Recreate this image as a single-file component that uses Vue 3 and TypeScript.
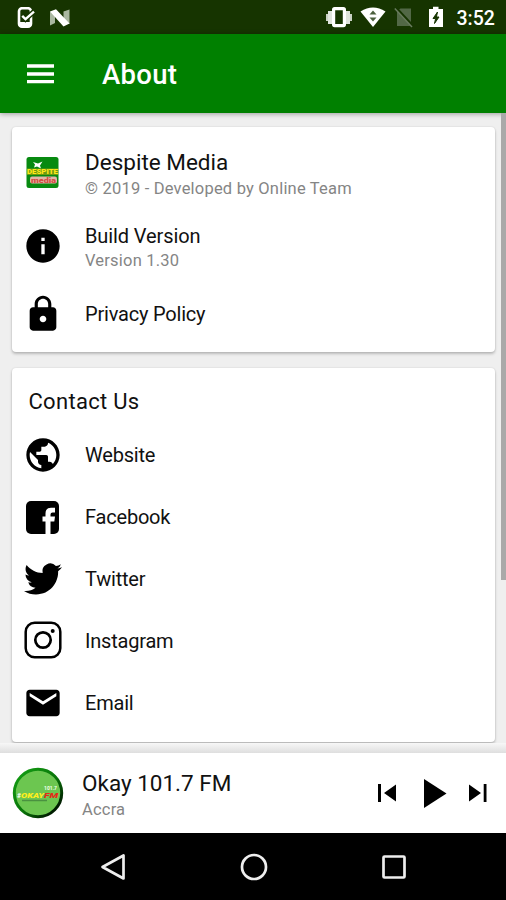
<script setup lang="ts">
interface Contact {
  id: string
  label: string
}

const contacts: Contact[] = [
  { id: 'website', label: 'Website' },
  { id: 'facebook', label: 'Facebook' },
  { id: 'twitter', label: 'Twitter' },
  { id: 'instagram', label: 'Instagram' },
  { id: 'email', label: 'Email' },
]
</script>

<template>
  <div class="screen">
    <div class="status">
      <div class="status-left">
        <svg class="device" width="18" height="22" viewBox="0 0 18 22">
          <rect x="2" y="1.2" width="12" height="18.5" rx="3" fill="none" stroke="#fff" stroke-width="2.6" />
          <path d="M2 15h12v4H2z" fill="#fff" />
          <path d="M5.2 9l3.3 3.3L17 4.4" fill="none" stroke="#163400" stroke-width="5" />
          <path d="M5.2 8.8l3.3 3.3L17 4.6" fill="none" stroke="#fff" stroke-width="2.4" />
        </svg>
        <svg class="nougat" width="22" height="18" viewBox="0 0 22 18">
          <path d="M1 2.500L6 5v9l-5 2.500zM14.500 2.500L20.500.5V15l-6-2z" fill="#a9b7a0" />
          <path d="M1 2.500L7 .3 20.500 14.500 14.500 17.500z" fill="#fff" />
        </svg>
      </div>
      <div class="status-right">
        <svg width="28" height="22" viewBox="0 0 28 22">
          <path d="M1 8h2v7H1zM25 8h2v7h-2z" fill="#c9d1c4" />
          <path d="M3 5h4v13H3zM21 5h4v13h-4z" fill="#dfe4dc" />
          <rect x="8.600" y="2.600" width="10.800" height="17" rx="1" fill="#163400" stroke="#fff" stroke-width="3.200" />
        </svg>
        <svg class="wifi" width="26" height="22" viewBox="0 0 26 22">
          <path d="M.5 5.500Q13-2.500 25.500 5.500L13 21z" fill="#fff" />
          <path d="M13 4.500l3.500 4h-7zM13 15.500l3.500-4h-7z" fill="#4b5f3d" />
        </svg>
        <svg class="sim" width="20" height="22" viewBox="0 0 20 22">
          <path d="M3 4.500L6.500 2.500H17V20H3z" fill="#526846" />
          <path d="M2 2L19 20.500" stroke="#163400" stroke-width="3" />
          <path d="M.8 2.500L18 21" stroke="#6a7c5f" stroke-width="1.500" />
        </svg>
        <svg class="battery" width="16" height="22" viewBox="0 0 16 22">
          <path d="M1 3h4V.8h5.500V3H15v18H1z" fill="#fff" />
          <path d="M9.500 6L5 12.500h2.600L6.500 17.500 11 11H8.400z" fill="#163400" stroke="#163400" />
        </svg>
        <span class="clock">3:52</span>
      </div>
    </div>

    <header class="appbar">
      <svg class="menu" width="27" height="20" viewBox="0 0 27 20">
        <path d="M0 2h27M0 10h27M0 17.700h27" stroke="#fff" stroke-width="3.300" />
      </svg>
      <h1>About</h1>
    </header>

    <main class="content">
      <section class="card info">
        <div class="row tall">
          <span class="icon">
            <svg width="33" height="33" viewBox="0 0 33 33">
              <rect x=".5" y="1" width="32" height="31" rx="2.500" fill="#078a10" />
              <path d="M7 6l5 1.500 4.500-2-2.500 4 1 3-4-2-3 1 1-3z" fill="#fff" />
              <rect x="1" y="12.500" width="31" height="6.500" fill="#6c9b10" />
              <rect x="4" y="20.500" width="27" height="7" rx="2" fill="#e0b8a6" />
              <text x="1" y="18" textLength="31" lengthAdjust="spacingAndGlyphs" class="logo-top">DESPITE</text>
              <text x="5" y="26.700" textLength="25" lengthAdjust="spacingAndGlyphs" class="logo-bottom">media</text>
            </svg>
          </span>
          <div class="texts lead">
            <div class="title big">Despite Media</div>
            <div class="sub">© 2019 - Developed by Online Team</div>
          </div>
        </div>
        <div class="row tall">
          <span class="icon">
            <svg width="40" height="40" viewBox="0 0 24 24">
              <path d="M12 2C6.480 2 2 6.480 2 12s4.480 10 10 10 10-4.480 10-10S17.520 2 12 2zm1 15h-2v-6h2v6zm0-8h-2V7h2v2z" />
            </svg>
          </span>
          <div class="texts build">
            <div class="title">Build Version</div>
            <div class="sub">Version 1.30</div>
          </div>
        </div>
        <div class="row">
          <span class="icon">
            <svg width="40" height="40" viewBox="0 0 24 24">
              <path d="M18 8h-1V6c0-2.760-2.240-5-5-5S7 3.240 7 6v2H6c-1.100 0-2 .9-2 2v10c0 1.100.9 2 2 2h12c1.100 0 2-.9 2-2V10c0-1.100-.9-2-2-2zm-6 9c-1.100 0-2-.9-2-2s.9-2 2-2 2 .9 2 2-.9 2-2 2zm3.100-9H8.900V6c0-1.710 1.390-3.100 3.100-3.100 1.710 0 3.100 1.390 3.100 3.100v2z" />
            </svg>
          </span>
          <div class="title contact">Privacy Policy</div>
        </div>
      </section>

      <section class="card">
        <h2>Contact Us</h2>
        <div v-for="c in contacts" :key="c.id" class="row">
          <span class="icon">
            <svg v-if="c.id === 'website'" width="40" height="40" viewBox="0 0 24 24">
              <path d="M12 2C6.480 2 2 6.480 2 12s4.480 10 10 10 10-4.480 10-10S17.520 2 12 2zm-1 17.930c-3.950-.49-7-3.850-7-7.930 0-.62.080-1.210.21-1.790L9 15v1c0 1.100.9 2 2 2v1.930zm6.900-2.540c-.26-.81-1-1.390-1.900-1.390h-1v-3c0-.55-.45-1-1-1H8v-2h2c.55 0 1-.45 1-1V7h2c1.100 0 2-.9 2-2v-.41c2.930 1.190 5 4.060 5 7.410 0 2.080-.8 3.970-2.100 5.390z" />
            </svg>
            <svg v-else-if="c.id === 'facebook'" width="33" height="33" viewBox="0 0 33 33">
              <rect width="33" height="33" rx="5" />
              <path d="M19.500 33V20.500H16.500V15.500H19.500V12.500Q19.500 6.700 25 6.700H29V11.500H26.500Q24.500 11.500 24.500 13.500V15.500H29L28.300 20.500H24.500V33z" fill="#fff" />
            </svg>
            <svg v-else-if="c.id === 'twitter'" width="38" height="38" viewBox="0 0 24 24">
              <path d="M23.953 4.570a10 10 0 01-2.825.775 4.958 4.958 0 002.163-2.723c-.951.555-2.005.959-3.127 1.184a4.920 4.920 0 00-8.384 4.482C7.690 8.095 4.067 6.130 1.640 3.162a4.822 4.822 0 00-.666 2.475c0 1.710.87 3.213 2.188 4.096a4.904 4.904 0 01-2.228-.616v.06a4.923 4.923 0 003.946 4.827 4.996 4.996 0 01-2.212.085 4.936 4.936 0 004.604 3.417 9.867 9.867 0 01-6.102 2.105c-.39 0-.779-.023-1.170-.067a13.995 13.995 0 007.557 2.209c9.053 0 13.998-7.496 13.998-13.985 0-.21 0-.42-.015-.63A9.935 9.935 0 0024 4.590z" />
            </svg>
            <svg v-else-if="c.id === 'instagram'" class="insta" width="38" height="38" viewBox="0 0 38 38" fill="none" stroke="#000">
              <rect x="1.700" y="1.700" width="34.600" height="34.600" rx="9" stroke-width="2.500" />
              <circle cx="19" cy="19" r="7.700" stroke-width="2.700" />
              <circle cx="28.700" cy="10" r="2" fill="#000" stroke="none" />
            </svg>
            <svg v-else width="40" height="40" viewBox="0 0 24 24">
              <path d="M20 4H4c-1.100 0-1.990.9-1.990 2L2 18c0 1.100.9 2 2 2h16c1.100 0 2-.9 2-2V6c0-1.100-.9-2-2-2zm0 4l-8 5-8-5V6l8 5 8-5v2z" />
            </svg>
          </span>
          <div class="title contact">{{ c.label }}</div>
        </div>
      </section>
      <div class="scrollbar"></div>
    </main>

    <div class="player-shadow"></div>
    <footer class="player">
      <svg class="cover" width="52" height="52" viewBox="0 0 52 52">
        <defs>
          <linearGradient id="ring" x1="0" y1="0" x2="1" y2="1">
            <stop offset="0" stop-color="#16a316" />
            <stop offset=".55" stop-color="#087208" />
            <stop offset=".85" stop-color="#001d00" />
          </linearGradient>
        </defs>
        <circle cx="26" cy="26" r="23.700" fill="#6cc650" stroke="url(#ring)" stroke-width="3" />
        <text x="32" y="22.500" textLength="13" lengthAdjust="spacingAndGlyphs" class="freq">101.7</text>
        <text x="5" y="31" textLength="4" lengthAdjust="spacingAndGlyphs" class="hash">#</text>
        <text x="9" y="31" textLength="23" lengthAdjust="spacingAndGlyphs" class="okay">OKAY</text>
        <text x="32" y="31" textLength="14" lengthAdjust="spacingAndGlyphs" class="fm">FM</text>
        <path d="M10 33.500h25" stroke="#4a9140" stroke-width="1.500" />
      </svg>
      <div class="texts">
        <div class="station">Okay 101.7 FM</div>
        <div class="sub">Accra</div>
      </div>
      <div class="controls">
        <svg width="18" height="18" viewBox="0 0 18 18"><path d="M0 0h3v18H0zM18 .5v17L6 9z" /></svg>
        <svg class="play" width="23" height="29" viewBox="0 0 23 29"><path d="M0 0l22.500 14.500L0 29z" /></svg>
        <svg width="18" height="18" viewBox="0 0 18 18"><path d="M14.700 0h2.800v18h-2.800zM0 .5v17L12 9z" /></svg>
      </div>
    </footer>

    <nav class="navbar">
      <svg width="28" height="28" viewBox="0 0 28 28"><path d="M24.500 2.500v23L3.500 14z" /></svg>
      <svg width="28" height="28" viewBox="0 0 28 28"><circle cx="14" cy="14" r="12" /></svg>
      <svg width="28" height="28" viewBox="0 0 28 28"><rect x="3.500" y="3.500" width="21" height="21" rx="1" /></svg>
    </nav>
  </div>
</template>

<style>
body {
  margin: 0;
  background: #000;
}
</style>

<style scoped>
.screen {
  width: 506px;
  height: 900px;
  display: flex;
  flex-direction: column;
  overflow: hidden;
  font-family: Roboto, "Liberation Sans", sans-serif;
  color: #111;
  background: #efefef;
}
svg {
  display: block;
  flex: none;
}
.status {
  height: 34px;
  flex: none;
  background: #163400;
  display: flex;
  justify-content: space-between;
  padding: 6px 9.500px 0 17px;
  box-sizing: border-box;
}
.status-left,
.status-right {
  display: flex;
}
.device {
  margin-top: 1px;
}
.nougat {
  margin: 3px 0 0 14px;
}
.wifi {
  margin-left: 7px;
}
.sim {
  margin-left: 8px;
}
.battery {
  margin-left: 14px;
}
.clock {
  margin-left: 13px;
  width: 40px;
  font-size: 19.500px;
  font-weight: 500;
  line-height: 26px;
  color: #fff;
  white-space: nowrap;
}
.appbar {
  height: 79px;
  flex: none;
  background: #008000;
  display: flex;
  align-items: center;
  padding-left: 26.500px;
  position: relative;
  box-shadow: 0 1px 5px rgba(0, 0, 0, 0.35);
}
h1 {
  margin: 3px 0 0 48.500px;
  font-size: 27.500px;
  font-weight: 500;
  line-height: 32px;
  letter-spacing: 0.3px;
  color: #fff;
}
.content {
  height: 630px;
  flex: none;
  box-sizing: border-box;
  padding: 14px 11px 0 11.500px;
  display: flex;
  flex-direction: column;
  gap: 16px;
  position: relative;
}
.card {
  background: #fff;
  border-radius: 4px;
  padding: 8px 11px;
  box-shadow: 0 2px 3px rgba(0, 0, 0, 0.22), 0 0 2px rgba(0, 0, 0, 0.12);
  height: 358px;
}
.card.info {
  height: 209px;
}
.row {
  height: 62px;
  display: flex;
  align-items: center;
}
.row.tall {
  height: 74px;
}
.icon {
  width: 40px;
  height: 40px;
  margin-right: 22.500px;
  display: flex;
  align-items: center;
  justify-content: center;
  flex: none;
}
.insta {
  margin-bottom: 2px;
}
.lead {
  padding-top: 6px;
}
.lead .sub {
  margin-top: 2px;
}
.build {
  padding-top: 5px;
}
.build .sub {
  margin-top: 1px;
}
.title {
  font-size: 20px;
  line-height: 24px;
  letter-spacing: -0.1px;
  white-space: nowrap;
}
.title.contact {
  letter-spacing: -0.2px;
}
.title.big,
.station {
  font-size: 22.500px;
  line-height: 26px;
  letter-spacing: 0;
  white-space: nowrap;
}
.sub {
  font-size: 16.500px;
  line-height: 24px;
  color: #858585;
  letter-spacing: 0.2px;
  white-space: nowrap;
}
h2 {
  margin: 0;
  padding: 13px 0 9px 6px;
  font-size: 22px;
  font-weight: 400;
  line-height: 26px;
  letter-spacing: 0.3px;
}
.scrollbar {
  position: absolute;
  right: 0;
  top: 0;
  width: 5px;
  height: 467px;
  background: #a9a9a9;
}
.player-shadow {
  height: 10px;
  flex: none;
  position: relative;
  background: linear-gradient(#f7f7f7, #dedede);
}
.player {
  height: 80px;
  flex: none;
  background: #fff;
  display: flex;
  align-items: center;
  padding: 0 19.500px 0 12px;
  box-sizing: border-box;
}
.player .texts {
  margin: 5px 0 0 18px;
  flex: 1;
}
.player .sub {
  margin-top: 2px;
}
.controls {
  display: flex;
  align-items: center;
}
.play {
  margin: 0 22px 0 28px;
}
.navbar {
  flex: 1;
  background: #000;
  display: flex;
  justify-content: center;
  align-items: center;
  gap: 112.500px;
  padding-left: 1px;
}
.navbar svg {
  fill: none;
  stroke: #eee;
  stroke-width: 2.700;
  stroke-linejoin: round;
}
.logo-top {
  font: 900 6.500px Roboto, sans-serif;
  fill: #ffe719;
}
.logo-bottom {
  font: 900 7px Roboto, sans-serif;
  fill: #d54b42;
}
.freq {
  font: 700 5.500px Roboto, sans-serif;
  fill: #efffe8;
}
.hash {
  font: 700 8px Roboto, sans-serif;
  fill: #fff;
}
.okay {
  font: italic 900 8px Roboto, sans-serif;
  fill: #ffee1c;
}
.fm {
  font: italic 900 8px Roboto, sans-serif;
  fill: #e52a18;
}
</style>
